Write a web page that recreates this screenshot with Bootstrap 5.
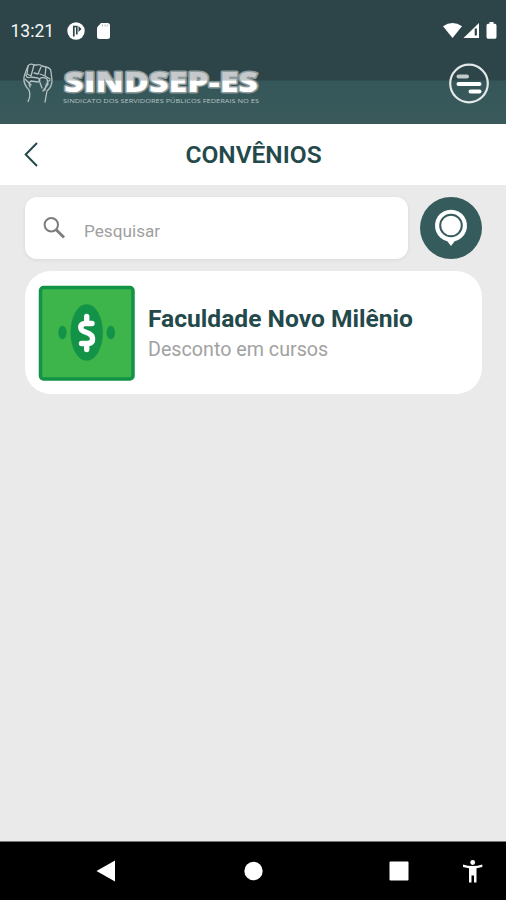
<!DOCTYPE html>
<html lang="pt-BR">
<head>
<meta charset="utf-8">
<meta name="viewport" content="width=device-width, initial-scale=1">
<title>Convênios</title>
<link href="https://cdn.jsdelivr.net/npm/bootstrap@5.3.0/dist/css/bootstrap.min.css" rel="stylesheet">
<style>
body{font-family:Roboto,"Liberation Sans",sans-serif;background:#eaeaea;color:#24494b}
svg{display:block;flex:none}
.screen{height:900px;overflow:hidden}
.top-area{height:123.5px;background:linear-gradient(#2d4548 0,#2d4548 80px,#365759 81px,#39595b 100%)}
.status{height:60px;padding:2px 8px 0 10.5px}
.clock{font-size:17.5px;line-height:20px;width:55.5px;color:#f4f6f6}
.brand-row{height:48px;padding:0 16px 0 22px}
.title-bar{height:61.5px;padding:2px 45px 0 22px}
.title-bar h1{font-size:24.5px;font-weight:600;line-height:30px}
.content{padding:12px 24px 0 25px}
.search-box{height:62px;width:383px;border-radius:12px;box-shadow:0 1px 4px rgba(0,0,0,.07);padding-left:17px}
.search-box input{font-size:17.2px;color:#777;margin-left:18px;padding:6px 0 0;line-height:24px}
.search-box input::placeholder{color:#a0a0a0;opacity:1}
.pin-btn{width:62px;height:62px;background:#365b5c}
.benefit{height:122.5px;border-radius:26px;margin-top:12px;padding:1px 13px 0}
.benefit-text{padding:2px 0 0 13px}
.benefit h2{font-size:24.6px;line-height:30px;font-weight:700}
.benefit p{font-size:19.7px;line-height:26px;padding-top:3px;color:#a2a2a2}
.nav-keys{height:59px;border-top:1px solid #777}
</style>
</head>
<body>
<div class="screen d-flex flex-column">
  <header class="top-area flex-shrink-0">
    <div class="status d-flex align-items-center">
      <span class="clock">13:21</span>
      <svg width="48" height="22" viewBox="0 0 48 22">
        <circle cx="10" cy="11" r="8.700" fill="#fff"/>
        <path d="M7.800 16.500V6.500H10.800V14.500" fill="none" stroke="#2d4548" stroke-width="1.700"/>
        <path d="M12.500 6L15.500 9L12.500 12Z" fill="#2d4548"/>
        <path d="M35 3H41.500Q44 3 44 5.500V16.500Q44 19 41.500 19H33.500Q31 19 31 16.500V7.500Z" fill="#fff"/>
        <path d="M36.500 4.500V6.500M39 4.500V6.500M41.300 4.500V6.500" stroke="#aebabb" stroke-width="1"/>
      </svg>
      <svg class="ms-auto" width="56" height="22" viewBox="0 0 56 22">
        <path d="M1 6.200Q10.500-.2 20 6.200L10.500 18Z" fill="#fff"/>
        <path d="M21.500 18L37 3V18Z" fill="#fff"/>
        <path d="M33.800 8.500V15.500" stroke="#2d4548" stroke-width="2.200"/>
        <path d="M47.500 2H51.500V3.800H53Q54.500 3.800 54.500 5.500V17Q54.500 18.800 53 18.800H46Q44.500 18.800 44.500 17V5.500Q44.500 3.800 46 3.800H47.500Z" fill="#fff"/>
      </svg>
    </div>
    <div class="brand-row d-flex align-items-center justify-content-between">
      <svg width="242" height="48" viewBox="22 60 242 48" role="img" aria-label="SINDSEP-ES">
        <defs>
          <linearGradient id="tone" gradientUnits="userSpaceOnUse" x1="0" x2="0" y1="60" y2="108">
            <stop offset=".42" stop-color="#c5c9cb"/><stop offset=".44" stop-color="#fff"/>
          </linearGradient>
        </defs>
        <g fill="none" stroke="#b4c1c2" stroke-width="1.300" stroke-linecap="round" stroke-linejoin="round">
          <path d="M28 101.500Q31 96 29 90Q23 84 24 77L26 71L28 66Q30 63 34 65L37 65Q40 64 42 66L46 67Q51 68 51 72L52 80Q52 87 47 91L45 102"/>
          <path d="M28 66L27 74L31 76L34 65M34 73L38 74L41 67M40 74L45 76L46 67M26 75Q27 79 31 77L38 78Q42 80 38 82L31 81Q28 83 30 87M39 80L42 88M45 76L50 79M50 80Q46 82 45 90M39 79Q43 76 47 79L48 84L43 91M25 79L31 85"/>
        </g>
        <g font-family="Open Sans, Lato, sans-serif">
          <text x="64" y="91.500" font-size="28.500" font-weight="800" textLength="194" lengthAdjust="spacingAndGlyphs" fill="url(#tone)" stroke="#8d9b9c" stroke-width="3" paint-order="stroke" stroke-linejoin="round">SINDSEP-ES</text>
          <text x="63" y="103" font-size="6" textLength="196" lengthAdjust="spacingAndGlyphs" fill="#b4c2c3">SINDICATO DOS SERVIDORES PÚBLICOS FEDERAIS NO ES</text>
        </g>
      </svg>
      <svg width="42" height="42" viewBox="0 0 42 42">
        <circle cx="21" cy="20.500" r="18.800" fill="none" stroke="#e2e7e7" stroke-width="2.200"/>
        <path d="M10.500 13.500H19" stroke="#c2caca" stroke-width="4" stroke-linecap="round"/>
        <path d="M10.500 21H31.500M22.500 28.500H31.500" stroke="#fff" stroke-width="4" stroke-linecap="round"/>
      </svg>
    </div>
  </header>
  <div class="title-bar bg-white d-flex align-items-center flex-shrink-0">
    <svg width="24" height="30" viewBox="0 0 24 30"><path d="M15 3L3.700 14.500L15 26" fill="none" stroke="#24494b" stroke-width="2"/></svg>
    <h1 class="flex-grow-1 text-center mb-0">CONVÊNIOS</h1>
  </div>
  <main class="content flex-grow-1">
    <div class="d-flex justify-content-between">
      <label class="search-box bg-white d-flex align-items-center">
        <svg width="24" height="24" viewBox="0 0 24 24"><circle cx="9.300" cy="8.800" r="6.700" fill="none" stroke="#7d7d7d" stroke-width="2"/><path d="M14.200 13.700L22 21.500" stroke="#7d7d7d" stroke-width="2.800"/></svg>
        <input class="border-0 bg-transparent flex-grow-1" type="text" placeholder="Pesquisar" aria-label="Pesquisar">
      </label>
      <button class="pin-btn btn rounded-circle border-0 p-0 d-flex align-items-center justify-content-center" type="button" aria-label="Mapa">
        <svg width="62" height="62" viewBox="0 0 62 62"><path d="M31 49L27.300 44.200A16 16 0 1 1 34.700 44.200Z" fill="#fff"/><circle cx="31" cy="28.500" r="10.800" fill="#fff" stroke="#365b5c" stroke-width="2"/></svg>
      </button>
    </div>
    <article class="benefit bg-white d-flex align-items-center">
      <svg width="97" height="96" viewBox="0 0 97 96">
        <rect x="2.500" y="2.500" width="92.500" height="91.500" rx="3" fill="#3eb54a" stroke="#129347" stroke-width="3.500"/>
        <ellipse cx="48.700" cy="47.500" rx="16.200" ry="28.300" fill="#129347"/>
        <ellipse cx="24.500" cy="47.500" rx="4.200" ry="6.700" fill="#129347"/><ellipse cx="72.800" cy="47.500" rx="4.200" ry="6.700" fill="#129347"/>
        <path d="M54 38.500H47.500Q42.800 38.500 42.800 42.500Q42.800 46 48.500 47.500Q54.600 49.500 54.600 54Q54.600 58.500 50 58.500H43.500M48.700 31.500V37M48.700 59V64.500" fill="none" stroke="#fff" stroke-width="5.400" stroke-linecap="round"/>
      </svg>
      <div class="benefit-text">
        <h2 class="mb-0">Faculdade Novo Milênio</h2>
        <p class="mb-0">Desconto em cursos</p>
      </div>
    </article>
  </main>
  <nav class="nav-keys bg-black flex-shrink-0">
    <svg width="506" height="58" viewBox="0 842 506 58" fill="#fff">
      <path d="M96.500 871L115 860.500V881.500Z"/>
      <circle cx="253.500" cy="871" r="9.200"/>
      <rect x="389.500" y="861.500" width="19" height="19" rx="1"/>
      <circle cx="472.700" cy="862.500" r="2.400"/>
      <path d="M463 864.500Q472.700 867.500 482.300 864.500V867L476.500 868.300V882.500H474V875.500H471.500V882.500H469V868.300L463 867Z"/>
    </svg>
  </nav>
</div>
<script src="https://cdn.jsdelivr.net/npm/bootstrap@5.3.0/dist/js/bootstrap.bundle.min.js"></script>
</body>
</html>
